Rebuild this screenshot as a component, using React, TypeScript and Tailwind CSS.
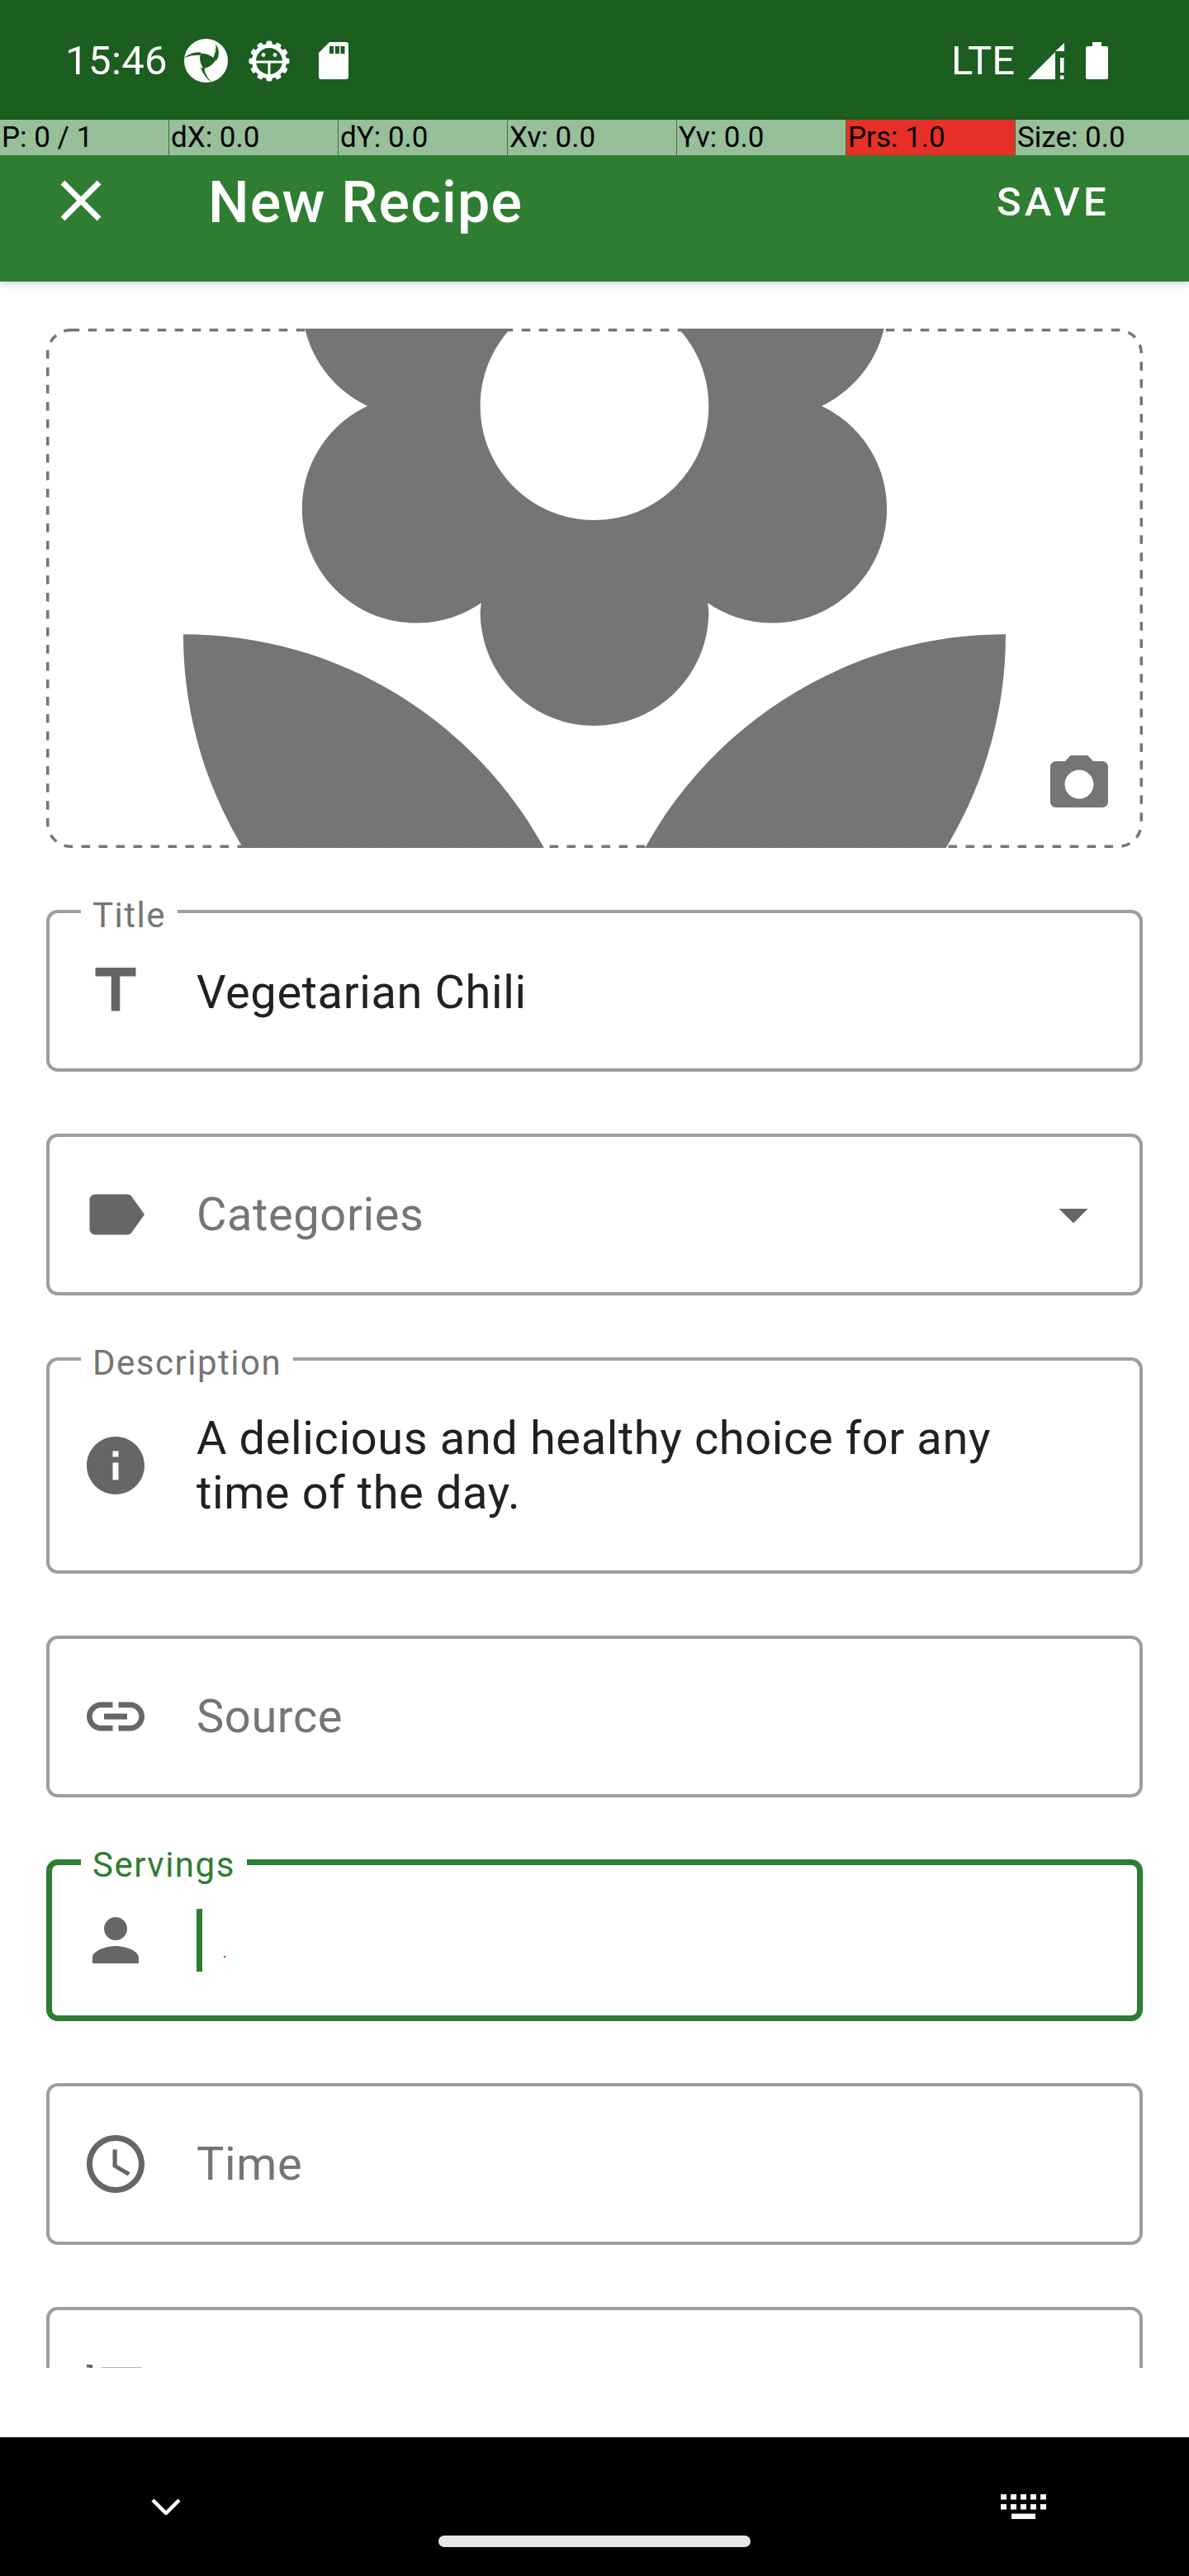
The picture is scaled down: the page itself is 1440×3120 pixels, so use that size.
import type { ReactNode } from "react";

const ICONS = {
	close: "M19 6.41 17.59 5 12 10.59 6.41 5 5 6.41 10.59 12 5 17.59 6.41 19 12 13.41 17.59 19 19 17.59 13.41 12z",
	title: "M5 4v3h5.5v12h3V7H19V4z",
	label: "M17.63 5.84C17.27 5.33 16.67 5 16 5L5 5.01C3.9 5.01 3 5.9 3 7v10c0 1.1.9 1.99 2 1.99L16 19c.67 0 1.27-.33 1.63-.84L22 12l-4.37-6.16z",
	info: "M12 2C6.48 2 2 6.48 2 12s4.48 10 10 10 10-4.48 10-10S17.52 2 12 2zm1 15h-2v-6h2v6zm0-8h-2V7h2v2z",
	link: "M3.9 12c0-1.71 1.39-3.1 3.1-3.1h4V7H7c-2.76 0-5 2.24-5 5s2.24 5 5 5h4v-1.9H7c-1.71 0-3.1-1.39-3.1-3.1zM8 13h8v-2H8v2zm9-6h-4v1.9h4c1.71 0 3.1 1.39 3.1 3.1s-1.39 3.1-3.1 3.1h-4V17h4c2.76 0 5-2.24 5-5s-2.24-5-5-5z",
	person: "M12 12c2.21 0 4-1.79 4-4s-1.79-4-4-4-4 1.79-4 4 1.79 4 4 4zm0 2c-2.67 0-8 1.34-8 4v2h16v-2c0-2.66-5.33-4-8-4z",
	clock: "M11.99 2C6.47 2 2 6.48 2 12s4.47 10 9.99 10C17.52 22 22 17.52 22 12S17.52 2 11.99 2zM12 20c-4.42 0-8-3.58-8-8s3.58-8 8-8 8 3.58 8 8-3.58 8-8 8zM12.5 7H11v6l5.25 3.15.75-1.23-4.5-2.67z",
	list: "M2 17h2v.5H3v1h1v.5H2v1h3v-4H2zm1-9h1V4H2v1h1v3zm-1 3h1.8L2 13.1v.9h3v-1H3.2L5 10.9V10H2v1zm5-6v2h14V5H7zm0 14h14v-2H7v2zm0-6h14v-2H7v2z",
	dropdown: "M7 10l5 5 5-5z",
	camera: "M9 2 7.17 4H4c-1.1 0-2 .9-2 2v12c0 1.1.9 2 2 2h16c1.1 0 2-.9 2-2V6c0-1.1-.9-2-2-2h-3.17L15 2H9zm3 15c-2.76 0-5-2.24-5-5s2.24-5 5-5 5 2.24 5 5-2.24 5-5 5z",
	flower: "M12 22c4.97 0 9-4.03 9-9-4.97 0-9 4.03-9 9zM5.6 10.25c0 1.38 1.12 2.5 2.5 2.5.53 0 1.01-.16 1.42-.44l-.02.19c0 1.38 1.12 2.5 2.5 2.5s2.5-1.12 2.5-2.5l-.02-.19c.4.28.89.44 1.42.44 1.38 0 2.5-1.12 2.5-2.5 0-1-.59-1.85-1.43-2.25.84-.4 1.43-1.25 1.43-2.25 0-1.38-1.12-2.5-2.5-2.5-.53 0-1.01.16-1.42.44l.02-.19C14.5 2.12 13.38 1 12 1S9.5 2.12 9.5 3.5l.02.19c-.4-.28-.89-.44-1.42-.44-1.38 0-2.5 1.12-2.5 2.5 0 1 .59 1.85 1.43 2.25-.84.4-1.43 1.25-1.43 2.25zM12 5.5c1.38 0 2.5 1.12 2.5 2.5s-1.12 2.5-2.5 2.5S9.5 9.38 9.5 8s1.12-2.5 2.5-2.5zM3 13c0 4.97 4.03 9 9 9 0-4.97-4.03-9-9-9z",
};

const DEBUG_CELLS = ["P: 0 / 1", "dX: 0.0", "dY: 0.0", "Xv: 0.0", "Yv: 0.0", "Prs: 1.0", "Size: 0.0"];

function Icon({ d, className }: { d: string; className: string }) {
	return (
		<svg viewBox="0 0 24 24" fill="currentColor" className={className}>
			<path d={d} />
		</svg>
	);
}

function AppiumLogo() {
	return (
		<svg viewBox="0 0 160 160" className="ml-[20px] h-[53px] w-[53px]">
			<circle cx="80" cy="80" r="80" fill="#fff" />
			<g fill="#1b5e20">
				<path d="M60 54Q92 52 116 78Q100 102 72 110Q52 84 60 54Z" />
				<path d="M0 70Q28 46 62 50L58 60Q28 58 0 70Z" />
				<path d="M116 18Q136 52 118 80L106 70Q118 46 116 18Z" />
				<path d="M60 104Q72 140 104 162Q76 136 74 108Z" />
			</g>
		</svg>
	);
}

function GearIcon() {
	return (
		<svg viewBox="0 0 50 50" className="ml-[25px] h-[50px] w-[50px]">
			{Array.from({ length: 12 }).map((_, i) => (
				<rect key={i} x="21.5" y="0.5" width="7" height="8" rx="2" fill="#fff" transform={`rotate(${i * 30} 25 25)`} />
			))}
			<circle cx="25" cy="25" r="21" fill="#fff" />
			<circle cx="25" cy="25" r="16" fill="#1b5e20" />
			<rect x="8" y="24.5" width="34" height="3" fill="#fff" />
			<rect x="23.5" y="26" width="3" height="16" fill="#fff" />
			<circle cx="18" cy="17.5" r="2.4" fill="#fff" />
			<circle cx="32" cy="17.5" r="2.4" fill="#fff" />
		</svg>
	);
}

function SdCardIcon() {
	return (
		<svg viewBox="0 0 36 45" className="ml-[35px] h-[45px] w-[36px]">
			<path d="M13 0H33Q36 0 36 3V42Q36 45 33 45H3Q0 45 0 42V13Z" fill="#fff" />
			<g fill="#1b5e20">
				<rect x="13" y="5" width="5" height="9" />
				<rect x="20" y="5" width="5" height="9" />
				<rect x="26.5" y="5" width="5" height="9" />
			</g>
		</svg>
	);
}

function SignalIcon() {
	return (
		<svg viewBox="0 0 44 44" className="ml-[16px] h-[44px] w-[44px]">
			<path d="M0 44 33 11V44ZM33 10 44 0V10Z" fill="#fff" />
			<rect x="39" y="18" width="4.5" height="18" fill="#fff" />
			<rect x="39" y="39.5" width="4.5" height="4.5" fill="#fff" />
		</svg>
	);
}

function BatteryIcon() {
	return (
		<svg viewBox="0 0 27 45" className="ml-[26px] h-[45px] w-[27px]">
			<path d="M8 0H19V5H25Q27 5 27 7V43Q27 45 25 45H2Q0 45 0 43V7Q0 5 2 5H8Z" fill="#fff" />
		</svg>
	);
}

function StatusBar() {
	return (
		<div className="flex h-[145px] items-center justify-between bg-[#1b5e20] pt-[2px] pr-[98px] pl-[79px] text-white">
			<div className="flex items-center">
				<span className="text-[49px] tracking-[0.4px]">15:46</span>
				<AppiumLogo />
				<GearIcon />
				<SdCardIcon />
			</div>
			<div className="flex items-center">
				<span className="text-[49px] leading-none">LTE</span>
				<SignalIcon />
				<BatteryIcon />
			</div>
		</div>
	);
}

function AppBar() {
	return (
		<div className="relative z-10 flex h-[196px] items-center bg-[#2e7d32] text-white shadow-[0_3px_8px_rgba(0,0,0,0.18)]">
			<Icon d={ICONS.close} className="ml-[56px] h-[84px] w-[84px]" />
			<span className="ml-[112px] pt-[4px] text-[70px] font-medium tracking-[1.2px]">New Recipe</span>
			<span className="mr-[96px] ml-auto pt-[4px] text-[49px] font-medium tracking-[4.4px]">SAVE</span>
			{/* the pointer location strip of the developer options lies over the bar */}
			<div className="absolute inset-x-0 top-0 grid h-[43px] grid-cols-[repeat(6,205px)_1fr] text-[35px] leading-[43px] text-black">
				{DEBUG_CELLS.map((cell, i) => (
					<div
						key={cell}
						className={`overflow-hidden whitespace-nowrap pl-[2px] ${i === 5 ? "bg-[#e73028]" : "bg-[#97bf9a]"} ${i < 6 ? "border-r border-[#2e7d32]" : ""}`}
					>
						{cell}
					</div>
				))}
			</div>
		</div>
	);
}

function ImagePicker() {
	return (
		<div className="relative flex h-[629px] w-full shrink-0 items-center justify-center overflow-hidden">
			<Icon d={ICONS.flower} className="h-[1328px] w-[1328px] shrink-0 text-[#757575]" />
			<svg viewBox="0 0 1328 629" className="absolute inset-0 h-[629px] w-[1328px]">
				<rect x="1.75" y="1.75" width="1324.5" height="625.5" rx="28" fill="none" stroke="#757575" strokeWidth="3.5" strokeDasharray="10.5 10.5" />
			</svg>
			<Icon d={ICONS.camera} className="absolute right-[35px] bottom-[35px] h-[84px] w-[84px] text-[#757575]" />
		</div>
	);
}

function Field({
	icon,
	label,
	focused,
	tall,
	children,
}: {
	icon: string;
	label?: string;
	focused?: boolean;
	tall?: boolean;
	children?: ReactNode;
}) {
	return (
		<div
			className={`relative flex w-full shrink-0 items-center rounded-[14px] ${tall ? "h-[262px]" : "h-[196px]"} ${
				focused ? "border-[7px] border-[#2e7d32] pl-[35px]" : "border-4 border-[#9e9e9e] pl-[38px]"
			}`}
		>
			{label && (
				<span
					className={`absolute bg-white px-[14px] text-[42px] leading-[49px] tracking-[1.5px] ${
						focused ? "top-[-25px] left-[35px] text-[#2e7d32]" : "top-[-22px] left-[38px] text-[#757575]"
					}`}
				>
					{label}
				</span>
			)}
			<Icon d={icon} className="h-[84px] w-[84px] shrink-0 text-[#666666]" />
			<div className="ml-[56px] flex-1 text-[56px] leading-[66px] tracking-[0.6px]">{children}</div>
		</div>
	);
}

function Form() {
	return (
		<div className="flex h-[2527px] flex-col gap-[75px] overflow-hidden bg-white px-[56px] pt-[57px]">
			<ImagePicker />
			<Field icon={ICONS.title} label="Title">
				<span className="relative top-[2px] text-[#212121]">Vegetarian Chili</span>
			</Field>
			<Field icon={ICONS.label}>
				<div className="flex items-center justify-between text-[#757575]">
					<span>Categories</span>
					<Icon d={ICONS.dropdown} className="mr-[38px] h-[84px] w-[84px] text-[#666666]" />
				</div>
			</Field>
			<Field icon={ICONS.info} label="Description" tall>
				<p className="pr-[100px] text-[#212121]">A delicious and healthy choice for any time of the day.</p>
			</Field>
			<Field icon={ICONS.link}>
				<span className="text-[#757575]">Source</span>
			</Field>
			<Field icon={ICONS.person} label="Servings" focused>
				<div className="flex items-center">
					<div className="h-[76px] w-[7px] bg-[#2e7d32]" />
					<div className="mt-[40px] ml-[26px] h-[2px] w-[2px] bg-[#ff0000]" />
				</div>
			</Field>
			<Field icon={ICONS.clock}>
				<span className="text-[#757575]">Time</span>
			</Field>
			<Field icon={ICONS.list} />
		</div>
	);
}

function NavBar() {
	return (
		<div className="flex h-[168px] flex-col bg-black pt-[69px]">
			<div className="flex h-[30px] items-center justify-between pr-[172px] pl-[183px]">
				<svg viewBox="0 0 36 20" className="h-[20px] w-[36px]">
					<path d="M2 2 18 18 34 2" fill="none" stroke="#fff" strokeWidth="4.5" />
				</svg>
				<svg viewBox="0 0 56 30" className="h-[30px] w-[56px]" fill="#fff">
					{[0, 12, 24, 36, 48].map((x) => (
						<g key={x}>
							<rect x={x} y="0" width="7" height="6.5" />
							<rect x={x} y="12" width="7" height="6.5" />
						</g>
					))}
					<rect x="13" y="23.5" width="29" height="6.5" />
				</svg>
			</div>
			<div className="mt-[20px] h-[14px] w-[378px] self-center rounded-full bg-[#e8e8e8]" />
		</div>
	);
}

export default function App() {
	return (
		<div className="flex h-[3120px] w-[1440px] flex-col overflow-hidden bg-white [font-family:Roboto,sans-serif]">
			<StatusBar />
			<AppBar />
			<Form />
			<div className="h-[84px] shrink-0 bg-white" />
			<NavBar />
		</div>
	);
}
